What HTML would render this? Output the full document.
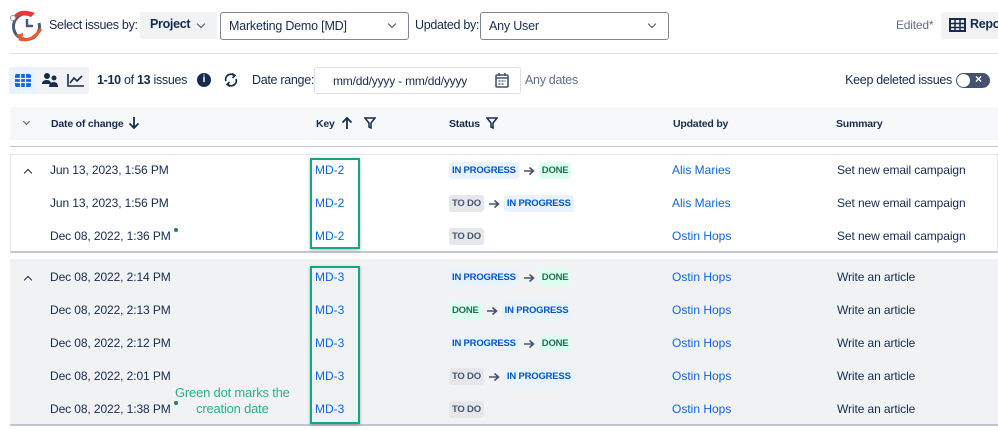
<!DOCTYPE html>
<html><head><style>
*{margin:0;padding:0;box-sizing:border-box}
body{width:998px;height:430px;overflow:hidden;background:#fff;font-family:"Liberation Sans",Arial,sans-serif;color:#172b4d;position:relative;font-size:12.5px}
.a{position:absolute;white-space:nowrap}
.sel{position:absolute;border:1px solid #7a869a;border-radius:3px;height:28px;background:#fff;font-size:12.5px;padding:6px 8px;letter-spacing:-0.2px}
.chev{position:absolute;width:6px;height:6px;border-right:1.6px solid #42526e;border-bottom:1.6px solid #42526e;transform:rotate(45deg)}
.up{position:absolute;width:6px;height:6px;border-left:1.8px solid #172b4d;border-top:1.8px solid #172b4d;transform:rotate(45deg)}
.th{position:absolute;top:118px;font-weight:bold;font-size:10.5px;color:#172b4d;letter-spacing:-0.2px}
.lz{font-size:12px;color:#172b4d;letter-spacing:-0.1px}
.k{color:#0c66e4;font-size:12px}
.ln{color:#0c66e4;font-size:12px}
.st{position:absolute;display:flex;align-items:center;height:17px}
.b{display:inline-block;font-size:9.5px;font-weight:bold;padding:3px 3px;border-radius:3px;line-height:11px;letter-spacing:-0.2px}
.ip{background:#e9f2ff;color:#0055cc}
.dn{background:#dcfff1;color:#216e4e}
.td{background:#e6e7ea;color:#44546f}
.ar{display:inline-block;margin:0 4px;width:12px;height:10px}
.dot{display:inline-block;width:4px;height:4px;border-radius:50%;background:#1f845a;vertical-align:top;margin-left:3px;margin-top:-1px}
.t13{font-size:12.5px;letter-spacing:-0.3px}
</style></head><body>
<svg width="0" height="0" style="position:absolute"><defs><symbol id="arr" viewBox="0 0 12 10"><path d="M1 5H10M6.5 1.5L10.5 5L6.5 8.5" fill="none" stroke="#44546f" stroke-width="1.6"/></symbol></defs></svg>
<svg class="a" style="left:9px;top:5px" width="36" height="40" viewBox="0 0 36 40">
<path d="M14 9 A13 13 0 1 0 30 18" fill="none" stroke="#4a5a7a" stroke-width="3"/>
<path d="M10 34 Q22 38 32 24" fill="none" stroke="#f05a28" stroke-width="3"/>
<path d="M7 30 L13 36 L14 28 Z" fill="#f05a28"/>
<path d="M18 14 V21 H24" fill="none" stroke="#4a5a7a" stroke-width="2.5"/>
<path d="M4 12 Q10 2 26 8 L22 12 Q12 8 6 14 Z" fill="#e53935"/>
<circle cx="4" cy="13" r="2.5" fill="#fff" stroke="#999" stroke-width="1"/>
</svg>
<div class="a t13" style="left:49px;top:18px">Select issues by:</div>
<div class="a" style="left:140px;top:12px;width:77px;height:27px;background:#f1f2f4;border-radius:3px"></div>
<div class="a t13" style="left:150px;top:17px;font-weight:bold">Project</div>
<div class="chev" style="left:198px;top:21px"></div>
<div class="sel" style="left:220px;top:12px;width:189px">Marketing Demo [MD]</div>
<div class="chev" style="left:389px;top:21px"></div>
<div class="a t13" style="left:415px;top:18px">Updated by:</div>
<div class="sel" style="left:480px;top:12px;width:189px">Any User</div>
<div class="chev" style="left:649px;top:21px"></div>
<div class="a" style="left:896px;top:18px;font-size:12px;color:#626f86;letter-spacing:-0.2px">Edited*</div>
<div class="a" style="left:941px;top:12px;width:60px;height:27px;background:#f1f2f4;border-radius:3px"></div>
<svg class="a" style="left:949px;top:18px" width="17" height="14"><rect x="1" y="1" width="15" height="12" fill="none" stroke="#172b4d" stroke-width="2"/><path d="M1 5.5H16M1 9.5H16M6 1V13M11 1V13" stroke="#172b4d" stroke-width="1.5"/></svg>
<div class="a t13" style="left:970px;top:17px;font-weight:bold">Repo</div>
<div class="a" style="left:10px;top:53px;width:988px;height:1px;background:#dcdfe4"></div>

<div class="a" style="left:9px;top:67px;width:80px;height:27px;background:#f1f2f4;border-radius:3px"></div>
<div class="a" style="left:9px;top:67px;width:27px;height:27px;background:#e9f2ff;border-radius:3px"></div>
<svg class="a" style="left:14px;top:73px" width="18" height="15"><rect x="1" y="1" width="16" height="13" rx="2" fill="#0c66e4"/><path d="M1 5.5H17M1 9.5H17M6.5 1V14M11.5 1V14" stroke="#e9f2ff" stroke-width="1.3"/></svg>
<svg class="a" style="left:41px;top:72px" width="18" height="16"><circle cx="6" cy="4" r="3" fill="#172b4d"/><circle cx="13" cy="6" r="2.5" fill="#172b4d"/><path d="M1 12 Q1 8 6 8 Q10 8 10 12Z M8 15 Q8 10 13 10 Q17 10 17 15Z" fill="#172b4d"/></svg>
<svg class="a" style="left:67px;top:73px" width="18" height="14"><path d="M1 1V13H17" fill="none" stroke="#172b4d" stroke-width="1.6"/><path d="M3 10L7 5L10 8L15 3" fill="none" stroke="#172b4d" stroke-width="1.6"/></svg>
<div class="a t13" style="left:97px;top:73px"><b>1-10</b> of <b>13</b> issues</div>
<div class="a" style="left:197px;top:73px;width:14px;height:14px;border-radius:50%;background:#172b4d;color:#fff;font-size:10px;font-weight:bold;text-align:center;line-height:14px">i</div>
<svg class="a" style="left:223px;top:72px" width="16" height="16" viewBox="0 0 16 16"><path d="M3 9A5 5 0 0 1 11 3.5M13 7A5 5 0 0 1 5 12.5" fill="none" stroke="#172b4d" stroke-width="1.8"/><path d="M9 1.5L12 3.5L9.5 6M7 14.5L4 12.5L6.5 10" fill="none" stroke="#172b4d" stroke-width="1.6"/></svg>
<div class="a t13" style="left:252px;top:73px">Date range:</div>
<div class="sel" style="left:314px;top:67px;width:207px;height:27px;border-color:#dcdfe4;padding:6px 0 0 18px;color:#172b4d;font-size:12px">mm/dd/yyyy - mm/dd/yyyy</div>
<svg class="a" style="left:495px;top:72px" width="14" height="16"><rect x="1" y="3" width="12" height="12" rx="1" fill="none" stroke="#44546f" stroke-width="1.6"/><path d="M1 6H13M4 1V4M10 1V4" stroke="#44546f" stroke-width="1.6"/><path d="M3.5 9h2M6.5 9h2M9.5 9h1M3.5 12h2M6.5 12h2" stroke="#44546f" stroke-width="1.3"/></svg>
<div class="a t13" style="left:525px;top:73px;color:#626f86">Any dates</div>
<div class="a t13" style="right:46px;top:73px">Keep deleted issues</div>
<div class="a" style="left:956px;top:73px;width:34px;height:15px;border-radius:8px;background:#44546f"></div>
<div class="a" style="left:957px;top:74px;width:13px;height:13px;border-radius:50%;background:#fff"></div>
<div class="a" style="left:975px;top:72px;color:#fff;font-size:12px;font-weight:bold">×</div>

<div class="a" style="left:10px;top:107px;width:988px;height:33px;background:#f7f8f9"></div>
<div class="chev" style="left:24px;top:119px;width:5px;height:5px"></div>
<div class="th" style="left:51px">Date of change</div>
<svg class="a" style="left:128px;top:116px" width="12" height="14"><path d="M6 1V12M1.5 7.5L6 12L10.5 7.5" fill="none" stroke="#172b4d" stroke-width="1.8"/></svg>
<div class="th" style="left:316px">Key</div>
<svg class="a" style="left:341px;top:116px" width="12" height="14"><path d="M6 13V2M1.5 6.5L6 2L10.5 6.5" fill="none" stroke="#172b4d" stroke-width="1.8"/></svg>
<svg class="a" style="left:364px;top:117px" width="12" height="12"><path d="M1 1H11L7 6V11L5 10V6Z" fill="none" stroke="#172b4d" stroke-width="1.5"/></svg>
<div class="th" style="left:449px">Status</div>
<svg class="a" style="left:486px;top:117px" width="12" height="12"><path d="M1 1H11L7 6V11L5 10V6Z" fill="none" stroke="#172b4d" stroke-width="1.5"/></svg>
<div class="th" style="left:673px">Updated by</div>
<div class="th" style="left:836px">Summary</div>
<div class="a" style="left:10px;top:146px;width:988px;height:1px;background:#c1c7d0"></div>

<div class="a" style="left:10px;top:154px;width:988px;height:99px;background:#fff;border:1px solid #e4e6ea;border-bottom:2px solid #c1c7d0"></div>
<div class="a" style="left:10px;top:259px;width:988px;height:167px;background:#f1f2f4;border-bottom:2px solid #c1c7d0"></div>

<div class="up" style="left:25px;top:170px"></div>
<div class="up" style="left:25px;top:277px"></div>

<div class="a lz" style="left:50px;top:163px">Jun 13, 2023, 1:56 PM</div>
<div class="a lz" style="left:50px;top:196px">Jun 13, 2023, 1:56 PM</div>
<div class="a lz" style="left:50px;top:229px">Dec 08, 2022, 1:36 PM<span class="dot"></span></div>
<div class="a lz" style="left:50px;top:270px">Dec 08, 2022, 2:14 PM</div>
<div class="a lz" style="left:50px;top:303px">Dec 08, 2022, 2:13 PM</div>
<div class="a lz" style="left:50px;top:336px">Dec 08, 2022, 2:12 PM</div>
<div class="a lz" style="left:50px;top:369px">Dec 08, 2022, 2:01 PM</div>
<div class="a lz" style="left:50px;top:402px">Dec 08, 2022, 1:38 PM<span class="dot"></span></div>
<div class="a" style="left:175px;top:385px;color:#2bb08a;font-size:13px;text-align:center;line-height:16px;letter-spacing:-0.2px">Green dot marks the<br>creation date</div>

<div class="a k" style="left:315px;top:163px">MD-2</div>
<div class="a k" style="left:315px;top:196px">MD-2</div>
<div class="a k" style="left:315px;top:229px">MD-2</div>
<div class="a k" style="left:315px;top:270px">MD-3</div>
<div class="a k" style="left:315px;top:303px">MD-3</div>
<div class="a k" style="left:315px;top:336px">MD-3</div>
<div class="a k" style="left:315px;top:369px">MD-3</div>
<div class="a k" style="left:315px;top:402px">MD-3</div>
<div class="a" style="left:310px;top:158px;width:50px;height:91px;border:2.5px solid #17a589;box-shadow:0 1px 3px rgba(0,0,0,.3)"></div>
<div class="a" style="left:310px;top:266px;width:50px;height:158px;border:2.5px solid #17a589;box-shadow:0 1px 3px rgba(0,0,0,.3)"></div>

<div class="st" style="left:449px;top:162px"><span class="b ip">IN PROGRESS</span><svg class="ar"><use href="#arr"/></svg><span class="b dn">DONE</span></div>
<div class="st" style="left:449px;top:195px"><span class="b td">TO DO</span><svg class="ar"><use href="#arr"/></svg><span class="b ip">IN PROGRESS</span></div>
<div class="st" style="left:449px;top:228px"><span class="b td">TO DO</span></div>
<div class="st" style="left:449px;top:269px"><span class="b ip">IN PROGRESS</span><svg class="ar"><use href="#arr"/></svg><span class="b dn">DONE</span></div>
<div class="st" style="left:449px;top:302px"><span class="b dn">DONE</span><svg class="ar"><use href="#arr"/></svg><span class="b ip">IN PROGRESS</span></div>
<div class="st" style="left:449px;top:335px"><span class="b ip">IN PROGRESS</span><svg class="ar"><use href="#arr"/></svg><span class="b dn">DONE</span></div>
<div class="st" style="left:449px;top:368px"><span class="b td">TO DO</span><svg class="ar"><use href="#arr"/></svg><span class="b ip">IN PROGRESS</span></div>
<div class="st" style="left:449px;top:401px"><span class="b td">TO DO</span></div>

<div class="a ln" style="left:672px;top:163px">Alis Maries</div>
<div class="a ln" style="left:672px;top:196px">Alis Maries</div>
<div class="a ln" style="left:672px;top:229px">Ostin Hops</div>
<div class="a ln" style="left:672px;top:270px">Ostin Hops</div>
<div class="a ln" style="left:672px;top:303px">Ostin Hops</div>
<div class="a ln" style="left:672px;top:336px">Ostin Hops</div>
<div class="a ln" style="left:672px;top:369px">Ostin Hops</div>
<div class="a ln" style="left:672px;top:402px">Ostin Hops</div>

<div class="a lz" style="left:837px;top:163px">Set new email campaign</div>
<div class="a lz" style="left:837px;top:196px">Set new email campaign</div>
<div class="a lz" style="left:837px;top:229px">Set new email campaign</div>
<div class="a lz" style="left:837px;top:270px">Write an article</div>
<div class="a lz" style="left:837px;top:303px">Write an article</div>
<div class="a lz" style="left:837px;top:336px">Write an article</div>
<div class="a lz" style="left:837px;top:369px">Write an article</div>
<div class="a lz" style="left:837px;top:402px">Write an article</div>
</body></html>
